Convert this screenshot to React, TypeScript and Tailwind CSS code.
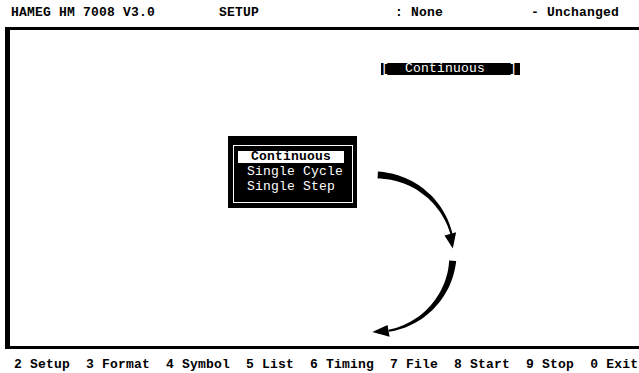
import React from 'react';

// centre of the two arcs, in page coordinates
const CX = 375;
const CY = 254;

const rad = (a: number) => (a * Math.PI) / 180;
const pt = (a: number, r: number) => `${(CX + r * Math.cos(rad(a))).toFixed(1)},${(CY + r * Math.sin(rad(a))).toFixed(1)}`;

// tapered arc shaft, thick at a0 thin at a1
function shaft(a0: number, a1: number, r: number, w0: number, w1: number, n = 30) {
  const outer: string[] = [];
  const inner: string[] = [];
  for (let i = 0; i <= n; i++) {
    const t = i / n;
    const a = a0 + (a1 - a0) * t;
    const w = w0 + (w1 - w0) * t;
    outer.push(pt(a, r + w / 2));
    inner.push(pt(a, r - w / 2));
  }
  return 'M' + outer.join(' L') + ' L' + inner.reverse().join(' L') + ' Z';
}

function head(tip: number, base: number, r: number, half: number) {
  return `M${pt(tip, r)} L${pt(base, r + half)} L${pt(base, r - half)} Z`;
}

const MENU = ['Continuous', 'Single Cycle', 'Single Step'];
const KEYS = ['2 Setup', '3 Format', '4 Symbol', '5 List', '6 Timing', '7 File', '8 Start', '9 Stop', '0 Exit'];

export default function App() {
  const mono = { fontFamily: '"Liberation Mono", "DejaVu Sans Mono", monospace' };

  return (
    <div className="w-[639px] h-[373px] bg-white text-black flex flex-col overflow-hidden select-none" style={mono}>
      {/* status line */}
      <div className="h-[27px] shrink-0 pl-[11px] pt-[6px] text-[13px] leading-[13px] font-bold tracking-[0.2px] whitespace-pre">
        {'HAMEG HM 7008 V3.0        SETUP                 : None           - Unchanged'}
      </div>

      {/* main window */}
      <div className="relative h-[322px] shrink-0 ml-[5px] -mr-[10px] border-t-[3px] border-l-[5px] border-b-[3px] border-black">
        <div className="ml-[371px] mt-[33px] w-fit h-[12px] pr-[3px] bg-black text-white text-[13px] leading-[12px] tracking-[0.2px] whitespace-pre">
          {'[  Continuous   ]'}
        </div>

        {/* mode popup */}
        <div className="absolute left-[218px] top-[106px] w-[129px] h-[72px] bg-black pl-[5px] pr-[4px] pt-[9px] pb-[5px]">
          <div className="h-full border border-white pt-[5px] pl-[4px] pr-[8px] flex flex-col gap-[3px]">
            {MENU.map((m, i) =>
              i === 0 ? (
                <div key={m} className="h-[12px] bg-white text-black font-bold text-[13px] leading-[12px] text-center tracking-[0.2px]">
                  {m}
                </div>
              ) : (
                <div key={m} className="h-[12px] pl-[9px] text-white text-[13px] leading-[12px] tracking-[0.2px] whitespace-pre">
                  {m}
                </div>
              )
            )}
          </div>
        </div>

        {/* flow arrows */}
        <svg className="absolute left-0 top-0 pointer-events-none" width="639" height="316" viewBox="10 30 639 316">
          <path d={shaft(-88, -14, 79, 7, 2)} fill="#000" />
          <path d={head(-4, -15, 78, 6)} fill="#000" />
          <path d={shaft(5, 80, 78, 7, 2)} fill="#000" />
          <path d={head(92, 80, 78, 6)} fill="#000" />
        </svg>
      </div>

      {/* function keys */}
      <div className="flex-1 pl-[14px] pt-[9px] flex gap-[16px] text-[13px] leading-[13px] font-bold tracking-[0.2px] whitespace-pre">
        {KEYS.map(k => (
          <span key={k}>{k}</span>
        ))}
      </div>
    </div>
  );
}
